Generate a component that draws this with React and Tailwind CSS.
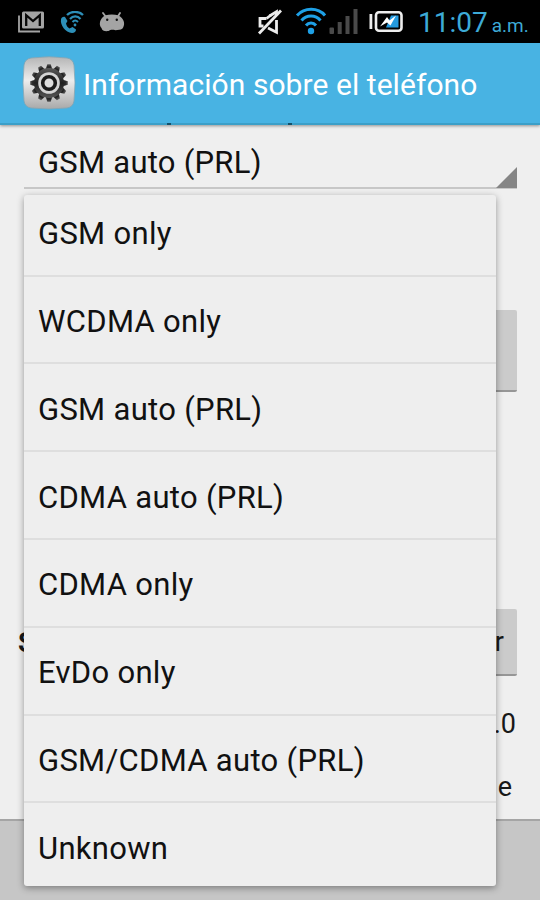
import React from 'react';
import { clsx } from 'clsx';

const NETWORK_TYPES = [
    'GSM only',
    'WCDMA only',
    'GSM auto (PRL)',
    'CDMA auto (PRL)',
    'CDMA only',
    'EvDo only',
    'GSM/CDMA auto (PRL)',
    'Unknown',
];

const MailIcon = () => (
    <svg width="26" height="22" viewBox="0 0 26 22" fill="none">
        <path d="M1 4.500V20.500H22" stroke="#a4a4a4" strokeWidth="1.800" />
        <rect x="4" y="0.500" width="22" height="17" rx="1.500" fill="#a4a4a4" />
        <path d="M8.200 15V4.200L15 10L21.800 4.200V15" stroke="#080808" strokeWidth="2.300" />
    </svg>
);

const WifiCallIcon = () => (
    <svg width="24" height="23" viewBox="0 0 24 23" fill="none" stroke="#2d8fb8">
        <path d="M1 8.500C0 14 5.500 21.500 12 22C14.500 22 16 20.500 16 18.500L12.500 16L9.500 17.500C7.500 16.500 6.500 14.500 6 12.500L7.500 10L5 6C3 5.500 1.300 6.500 1 8.500Z" fill="#2d8fb8" stroke="none" />
        <path d="M7 4C11 -0.200 19 0 23 4" strokeWidth="2.300" />
        <path d="M10 8C13 4.500 17.500 4.500 20.500 8" strokeWidth="2.200" />
        <path d="M12.500 11C14.500 8.800 16 9 18 11" strokeWidth="2" />
        <circle cx="15" cy="14" r="1.400" fill="#2d8fb8" stroke="none" />
    </svg>
);

const AndroidIcon = () => (
    <svg width="26" height="20" viewBox="0 0 26 20">
        <path d="M4 1L7 5M21 1L18.500 5" stroke="#a4a4a4" strokeWidth="1.800" strokeLinecap="round" />
        <path d="M3 6C4.500 3.500 8 2.500 12.800 2.500S21 3.500 22.800 6C25.500 9 26 13 23.500 16.500C21.500 18.500 19 17.500 16.500 18.200C13.500 17.500 11.500 17.500 9.500 19C6 19.500 3 18.800 2.500 16C0 13.500 0.500 9 3 6Z" fill="#a4a4a4" />
        <circle cx="8.200" cy="7.800" r="1.200" fill="#111" />
        <circle cx="17.800" cy="7.800" r="1.200" fill="#111" />
    </svg>
);

const MuteIcon = () => (
    <svg width="26" height="26" viewBox="0 0 26 26" fill="none" stroke="#ececec" strokeWidth="2.800">
        <path d="M9.500 9.500H3V17H6.500M12.500 7L19.500 2.800V6M11 19L19.500 23.200V11" />
        <path d="M9.500 9.500L14 6" />
        <path d="M2 24.500L24 1.500" />
    </svg>
);

const WifiIcon = () => (
    <svg width="32" height="28" viewBox="0 0 32 28" fill="none" stroke="#1ea0e6" strokeWidth="3">
        <path d="M2 8.500C9.500 0.300 23 0.300 30 8.500" />
        <path d="M6.500 13.500C11.500 7.600 20.500 7.600 25.500 13.500" />
        <path d="M11 18.500C13.800 15 18.200 15 21 18.500" />
        <circle cx="16" cy="24" r="3.200" fill="#1ea0e6" stroke="none" />
    </svg>
);

const SignalIcon = () => (
    <svg width="29" height="26" viewBox="0 0 29 26" fill="#4a4a4a">
        <rect x="0.500" y="18.500" width="4.500" height="6.500" rx="1" />
        <rect x="8.700" y="13" width="4" height="12" />
        <rect x="16.500" y="7" width="4" height="18" />
        <rect x="24.500" y="0" width="4" height="25" />
    </svg>
);

const BatteryIcon = () => (
    <svg width="34" height="22" viewBox="0 0 34 22">
        <rect x="0.500" y="3" width="2.800" height="15" fill="#eee" />
        <rect x="7" y="1.300" width="25.500" height="18.500" rx="3" fill="#000" stroke="#eee" strokeWidth="2.600" />
        <path d="M22 4.500H29.500V16.500H17Z" fill="#249be0" />
        <path d="M11 15.500L18 6L20.500 9.500L27 4.500L21.500 14.500L18 11.500Z" fill="#fff" />
    </svg>
);

const SettingsIcon = () => (
    <svg width="54" height="54" viewBox="0 0 54 54">
        <defs>
            <linearGradient id="plate" x1="0" y1="0" x2="0" y2="1">
                <stop offset="0" stopColor="#b5b5b5" />
                <stop offset="0.450" stopColor="#ededed" />
                <stop offset="1" stopColor="#a9a9a9" />
            </linearGradient>
            <linearGradient id="gear" x1="0" y1="0" x2="0" y2="1">
                <stop offset="0" stopColor="#595959" />
                <stop offset="0.500" stopColor="#202020" />
                <stop offset="1" stopColor="#565656" />
            </linearGradient>
        </defs>
        <path d="M9 2Q27 -0.500 45 2Q51 3 52 9Q54 27 52 45Q51 51 45 52Q27 54 9 52Q3 51 2 45Q0 27 2 9Q3 3 9 2Z" fill="url(#plate)" stroke="#7fa5b5" strokeWidth="0.800" />
        <g fill="url(#gear)">
            {[...Array(12)].map((_, i) => (
                <path key={i} d="M23.500 14L25.300 8.200H28.700L30.500 14Z" transform={`rotate(${i * 30} 27 27)`} />
            ))}
            <circle cx="27" cy="27" r="15" />
        </g>
        <circle cx="27" cy="27" r="10.800" fill="#d4d4d4" />
        <circle cx="27" cy="27" r="6.300" fill="#dedede" stroke="#1b1b1b" strokeWidth="3.600" />
    </svg>
);

const StatusBar = () => (
    <div className="flex h-[43px] shrink-0 items-start bg-black">
        <div className="flex pt-[11px] pl-[18px]">
            <MailIcon />
            <div className="ml-[16px]"><WifiCallIcon /></div>
            <div className="mt-[1px] ml-[15px]"><AndroidIcon /></div>
        </div>
        <div className="ml-auto flex">
            <div className="mt-[9px]"><MuteIcon /></div>
            <div className="mt-[7px] ml-[12px]"><WifiIcon /></div>
            <div className="mt-[9px] ml-[2px]"><SignalIcon /></div>
            <div className="mt-[11px] ml-[11px]"><BatteryIcon /></div>
        </div>
        <div className="ml-[15px] flex w-[122px] items-baseline whitespace-nowrap text-[#3daad6]">
            <span className="text-[28px] leading-[46px]">11:07</span>
            <span className="ml-[4px] text-[19px] leading-none">a.m.</span>
        </div>
    </div>
);

const Header = () => (
    <header className="relative z-10 flex h-[82px] shrink-0 items-center border-b-2 border-[#3b9fc8] bg-[#48b3e3] pl-[22px] shadow-[0_1px_3px_rgba(0,0,0,0.4)]">
        <SettingsIcon />
        <h1 className="ml-[7px] pt-[3px] text-[30px] leading-none tracking-[0.06px] whitespace-nowrap text-white">Información sobre el teléfono</h1>
        {/* descenders of the label scrolled under the bar */}
        <span className="absolute -bottom-[2px] left-[167px] h-[2px] w-[4px] bg-[#14516a]" />
        <span className="absolute -bottom-[2px] left-[288px] h-[2px] w-[4px] bg-[#14516a]" />
    </header>
);

const Dropdown = ({ items }) => (
    <ul className="absolute top-[195px] left-6 z-20 w-[472px] rounded-[3px] bg-[#eeeeee] shadow-[0_2px_7px_rgba(0,0,0,0.38)]">
        {items.map((item, i) => (
            <li
                key={item}
                className={clsx(
                    'flex items-center pl-[14px] text-[31px] leading-none tracking-[0.3px] text-[#111]',
                    i === 0 ? 'h-[81.500px] pb-[2px]' : i === items.length - 1 ? 'h-[82.500px] pt-[8px]' : 'h-[87.830px] pt-[4px]',
                    i < items.length - 1 && 'border-b-2 border-[#dedede]'
                )}
            >
                {item}
            </li>
        ))}
    </ul>
);

export default function App() {
    return (
        <div className="relative flex h-[900px] w-[540px] flex-col overflow-hidden bg-[#c6c6c6] font-['Roboto',sans-serif]">
            <StatusBar />
            <Header />
            <main className="flex h-[696px] shrink-0 flex-col border-b-2 border-[#a5a5a5] bg-[#efefef] pr-[23px] pl-[18px] text-[27px] text-[#181818]">
                <div className="ml-[6px] flex h-[64px] items-end justify-between border-b-2 border-[#c7c7c7] pl-[14px]">
                    <span className="pb-[9px] text-[31px] leading-none tracking-[0.25px] text-[#111]">GSM auto (PRL)</span>
                    <svg className="-mb-[1px]" width="21" height="21" viewBox="0 0 21 21">
                        <path d="M21 0V21H0Z" fill="#858585" />
                    </svg>
                </div>
                <div className="mt-[121px] ml-auto h-[82px] w-[140px] rounded-[2px] border-b-2 border-[#969696] bg-[#cbcbcb]" />
                <div className="mt-[217px] flex h-[67px] items-center justify-between">
                    <span className="pt-[2px] font-bold">S</span>
                    <div className="flex h-[67px] w-[140px] items-center justify-end rounded-[2px] border-b-2 border-[#969696] bg-[#cbcbcb] pt-[2px] pr-[13px]">r</div>
                </div>
                <div className="mt-[34px] pr-[1px] text-right leading-[28px]">.0</div>
                <div className="mt-[35px] pr-[5px] text-right leading-[28px]">e</div>
            </main>
            <Dropdown items={NETWORK_TYPES} />
        </div>
    );
}
